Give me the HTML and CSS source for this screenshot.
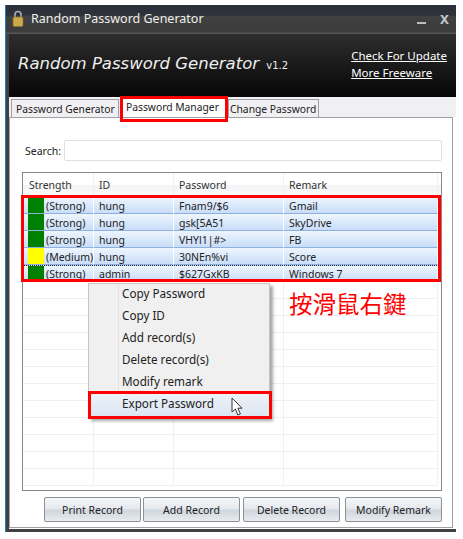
FILE: index.html
```html
<!DOCTYPE html>
<html lang="en">

<head>
    <meta charset="UTF-8">
    <title>Random Password Generator</title>
    <link rel="stylesheet" href="styles.css">
</head>

<body>
    <div class="window">
        <div class="titlebar">
            <svg class="lock" width="12" height="17" viewBox="0 0 12 17">
                <path d="M3 8V4.5a3 3 0 0 1 6 0V8" fill="none" stroke="#a9acb0" stroke-width="1.6"/>
                <rect x="1" y="7" width="10" height="9.5" rx="1.5" fill="#c9a94a" stroke="#8a7128" stroke-width="0.6"/>
            </svg>
            <span class="titlebar-text">Random Password Generator</span>
            <span class="minimize"></span>
            <span class="close">x</span>
        </div>

        <div class="banner">
            <div class="banner-title">Random Password Generator <small>v1.2</small></div>
            <div class="banner-links">
                <a href="#">Check For Update</a>
                <a href="#">More Freeware</a>
            </div>
        </div>

        <div class="tabs">
            <div class="tab tab-generator">Password Generator</div>
            <div class="tab tab-active">Password Manager</div>
            <div class="tab tab-change">Change Password</div>
        </div>

        <div class="panel">
            <div class="search">
                <label for="search">Search:</label>
                <input type="text" id="search">
            </div>

            <div class="list">
                <div class="row row-head">
                    <div>Strength</div>
                    <div>ID</div>
                    <div>Password</div>
                    <div>Remark</div>
                </div>
                <div class="row row-selected">
                    <div class="strength"><i class="swatch swatch-green"></i>(Strong)</div>
                    <div>hung</div>
                    <div>Fnam9/$6</div>
                    <div>Gmail</div>
                </div>
                <div class="row row-selected">
                    <div class="strength"><i class="swatch swatch-green"></i>(Strong)</div>
                    <div>hung</div>
                    <div>gsk[5A51</div>
                    <div>SkyDrive</div>
                </div>
                <div class="row row-selected">
                    <div class="strength"><i class="swatch swatch-green"></i>(Strong)</div>
                    <div>hung</div>
                    <div>VHYl1|#&gt;</div>
                    <div>FB</div>
                </div>
                <div class="row row-selected">
                    <div class="strength"><i class="swatch swatch-yellow"></i>(Medium)</div>
                    <div>hung</div>
                    <div>30NEn%vi</div>
                    <div>Score</div>
                </div>
                <div class="row row-selected row-focus">
                    <div class="strength"><i class="swatch swatch-green"></i>(Strong)</div>
                    <div>admin</div>
                    <div>$627GxKB</div>
                    <div>Windows 7</div>
                </div>
                <div class="row"><div></div><div></div><div></div><div></div></div>
                <div class="row"><div></div><div></div><div></div><div></div></div>
                <div class="row"><div></div><div></div><div></div><div></div></div>
                <div class="row"><div></div><div></div><div></div><div></div></div>
                <div class="row"><div></div><div></div><div></div><div></div></div>
                <div class="row"><div></div><div></div><div></div><div></div></div>
                <div class="row"><div></div><div></div><div></div><div></div></div>
                <div class="row"><div></div><div></div><div></div><div></div></div>
                <div class="row"><div></div><div></div><div></div><div></div></div>
                <div class="row"><div></div><div></div><div></div><div></div></div>
                <div class="row"><div></div><div></div><div></div><div></div></div>
                <div class="row"><div></div><div></div><div></div><div></div></div>
            </div>

            <div class="actions">
                <button>Print Record</button>
                <button>Add Record</button>
                <button class="btn-delete">Delete Record</button>
                <button class="btn-modify">Modify Remark</button>
            </div>
        </div>
    </div>

    <!-- things lying over the window -->
    <div class="menu">
        <div class="menu-item">Copy Password</div>
        <div class="menu-item">Copy ID</div>
        <div class="menu-item">Add record(s)</div>
        <div class="menu-item">Delete record(s)</div>
        <div class="menu-item">Modify remark</div>
        <div class="menu-item menu-item-hover">Export Password</div>
    </div>
    <svg class="cursor" width="14" height="20" viewBox="0 0 14 20">
        <path d="M1 1v14l3.4-3 2.4 6 2.6-1-2.5-5.8H11z" fill="#fff" stroke="#333" stroke-width="1"/>
    </svg>
    <div class="mark mark-tab"></div>
    <div class="mark mark-rows"></div>
    <div class="mark mark-export"></div>
    <div class="note">按滑鼠右鍵</div>
</body>

</html>
```

FILE: styles.css
```css
* {
    box-sizing: border-box;
}

body {
    margin: 0;
    width: 463px;
    height: 539px;
    position: relative;
    overflow: hidden;
    background-color: #fff;
    font-family: "Noto Sans", sans-serif;
    font-size: 10.5px;
    color: #222;
}

.window {
    margin: 5px 0 0 6px;
    width: 450px;
    height: 527px;
    background-color: #fff;
    border-left: 3px solid #3f4144;
    border-bottom: 3px solid #3f4144;
    box-shadow: -1px 0 0 #1c7fc0;
    display: flex;
    flex-direction: column;
}

.titlebar {
    height: 29px;
    margin-left: -3px;
    padding: 0 6px 3px 6px;
    display: flex;
    align-items: center;
    color: #eee;
    font-size: 12.5px;
    background: linear-gradient(#2a2f3b 0, #2f3239 35%, #414141 40%, #3a3a3a 90%, #5a5a5a 100%);
}

.lock {
    flex: none;
}

.titlebar-text {
    margin-left: 7px;
    flex: 1;
}

.minimize {
    width: 9px;
    height: 2px;
    margin-top: 10px;
    background-color: #b9bec4;
}

.close {
    margin-left: 14px;
    margin-right: 1px;
    margin-top: 2px;
    font-family: "Liberation Sans", sans-serif;
    font-weight: bold;
    font-size: 16px;
    line-height: 16px;
    color: #c2c8cc;
}

.banner {
    height: 63px;
    padding: 0 9px 0 9px;
    display: flex;
    align-items: center;
    justify-content: space-between;
    background: linear-gradient(#2e2e2e, #060606);
}

.banner-title {
    margin-top: -5px;
    font-family: "DejaVu Sans", sans-serif;
    font-style: italic;
    font-size: 16.5px;
    color: #eee;
    white-space: nowrap;
}

.banner-title small {
    font-style: normal;
    font-size: 10px;
    margin-left: 2px;
}

.banner-links {
    display: flex;
    flex-direction: column;
    gap: 1px;
    margin-top: -3px;
}

.banner-links a {
    color: #fff;
    font-size: 11.5px;
    line-height: 16px;
}

.tabs {
    height: 20px;
    padding: 2px 0 0 2px;
    display: flex;
    background-color: #f0f0f2;
}

.tab {
    padding-left: 4px;
    font-size: 10.3px;
    line-height: 19px;
    border: 1px solid #a0a0a4;
    border-bottom: none;
    white-space: nowrap;
}

.tab-generator {
    width: 108px;
    margin-right: 1px;
}

.tab-change {
    width: 91px;
    padding-left: 1px;
}

.tab-active {
    background-color: #fff;
    width: 108px;
    margin-top: -1px;
    height: 19px;
    line-height: 18px;
    border: none;
    padding-left: 6px;
}

.panel {
    width: 444px;
    height: 411px;
    padding: 22px 10px 0 12px;
    background-color: #fff;
    border: 1px solid #a0a0a4;
}

.search {
    height: 21px;
    margin-bottom: 11px;
    display: flex;
    align-items: center;
}

.search label {
    width: 42px;
    padding-left: 3px;
    flex: none;
}

.search input {
    flex: 1;
    height: 21px;
    border: 1px solid #dcdfe3;
    border-radius: 2px;
    background-color: #fff;
}

.list {
    height: 319px;
    border: 1px solid #828790;
    overflow: hidden;
    background-color: #fff;
}

.row {
    display: grid;
    grid-template-columns: 71px 80px 110px 154px;
    height: 17px;
    line-height: 18px;
    white-space: nowrap;
}

.row > div {
    padding-left: 5px;
    border-right: 1px solid #f0f0f0;
    border-bottom: 1px solid #f0f0f0;
    overflow: hidden;
}

.row-head {
    height: 24px;
    line-height: 24px;
    color: #333;
    background: linear-gradient(#fff 50%, #f3f4f6 50%, #fafafa);
}

.row-head > div {
    border-bottom: none;
}

.row-head > div:first-child {
    padding-left: 6px;
}

.row-selected {
    background: linear-gradient(#eef5fd, #c6dcf8);
}

.row-selected > div {
    border-right-color: #fff;
    border-bottom-color: #8eb0de;
}

.row-focus {
    border-top: 1px dotted #222;
    line-height: 16px;
}

.strength {
    display: flex;
    gap: 2px;
}

.swatch {
    width: 16px;
    height: 16px;
    flex: none;
}

.swatch-green {
    background-color: #008000;
}

.swatch-yellow {
    background-color: #ffff00;
}

.actions {
    margin-top: 6px;
    display: flex;
    justify-content: flex-end;
    gap: 2px;
}

.actions button {
    width: 97px;
    height: 25px;
    padding: 0;
    font-family: inherit;
    font-size: 10.5px;
    color: #222;
    border: 1px solid #8d9095;
    border-radius: 2px;
    background: linear-gradient(#f4f6f8, #e6e9ee 45%, #cfd6de 55%, #e9ecf0);
}

.actions .btn-delete {
    margin-left: 1px;
}

.actions .btn-modify {
    margin-left: 3px;
}

.menu {
    position: absolute;
    left: 88px;
    top: 283px;
    width: 182px;
    height: 135px;
    background: linear-gradient(to right, #f0f0f0 29px, #e3e3e3 29px, #e3e3e3 30px, #f0f0f0 30px);
    border: 1px solid #c4c4c4;
    box-shadow: 3px 3px 3px rgba(0, 0, 0, 0.35);
}

.menu-item {
    height: 22px;
    line-height: 19px;
    padding-left: 33px;
    font-size: 11.7px;
    color: #222;
}

.menu-item-hover {
    margin: 0 1px;
    padding-left: 32px;
    border-radius: 2px;
    background: linear-gradient(#eef2f8, #dbe5f2);
}

.cursor {
    position: absolute;
    left: 231px;
    top: 397px;
}

.mark {
    position: absolute;
    border: 3px solid #f00;
}

.mark-tab {
    left: 120px;
    top: 96px;
    width: 108px;
    height: 26px;
}

.mark-rows {
    left: 21px;
    top: 195px;
    width: 420px;
    height: 87px;
}

.mark-export {
    left: 88px;
    top: 391px;
    width: 184px;
    height: 28px;
}

.note {
    position: absolute;
    left: 289px;
    top: 287px;
    font-family: "Noto Sans CJK TC", sans-serif;
    font-size: 23.5px;
    line-height: 32px;
    color: #f00;
    white-space: nowrap;
}
```
